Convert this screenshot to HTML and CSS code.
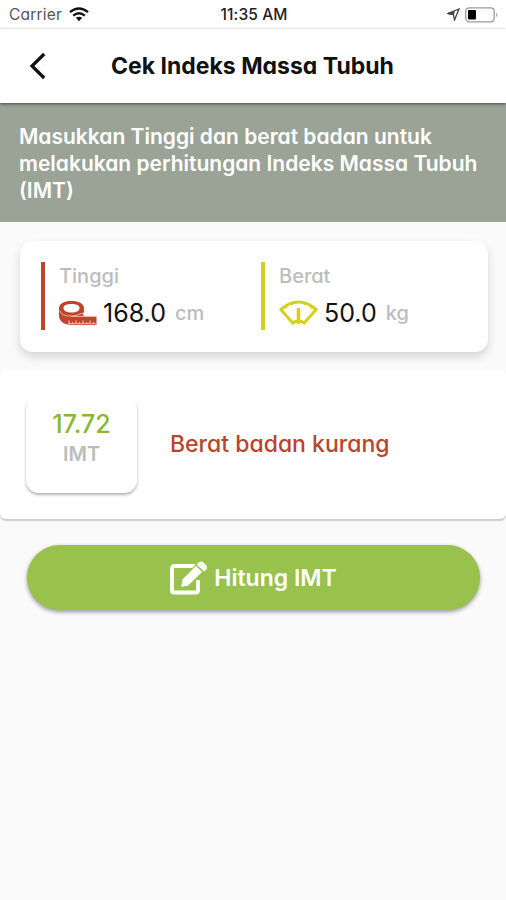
FILE: index.html
```html
<!DOCTYPE html>
<html lang="id">
<head>
<meta charset="utf-8">
<title>Cek Indeks Massa Tubuh</title>
<link rel="stylesheet" href="styles.css">
</head>
<body>
<div class="status">
  <div class="status-left"><span class="carrier">Carrier</span>
    <svg width="20" height="15" viewBox="0 0 20 15" fill="none" stroke="#111" stroke-width="2.3"><path d="M1 5.2Q10-2.2 19 5.2M4.2 8.6Q10 3.8 15.8 8.6"/><path d="M6.8 10.8Q10 8.5 13.2 10.8L10 14.2Z" fill="#111" stroke="none"/></svg>
  </div>
  <span class="clock">11:35 AM</span>
  <div class="status-right">
    <svg width="13" height="13" viewBox="0 0 13 13" fill="none" stroke="#444" stroke-width="1.3"><path d="M1 5.5L12 1L7.5 12L6.4 6.4Z"/><path d="M1 5.5L7 4L6.4 6.4Z" fill="#333"/></svg>
    <svg width="34" height="16" viewBox="0 0 34 16"><rect x=".8" y=".8" width="28.4" height="14" rx="3.5" fill="#fff" stroke="#999" stroke-width="1.3"/><rect x="3" y="3" width="8" height="9.6" rx="1" fill="#000"/><path d="M31.2 5.5Q33.4 7.8 31.2 10.2Z" fill="#999"/></svg>
  </div>
</div>
<header class="bar">
  <svg class="back" width="18" height="28" viewBox="0 0 18 28" fill="none" stroke="#111" stroke-width="3.2"><path d="M15.2 2L3 14L15.2 26"/></svg>
  <h1><span>Cek Indeks Massa Tubuh</span></h1>
</header>
<p class="banner"><span class="b1">Masukkan Tinggi dan berat badan untuk</span><br><span class="b2">melakukan perhitungan Indeks Massa Tubuh</span><br><span class="b3">(IMT)</span></p>
<section class="measures">
  <div class="measure height">
    <div class="label">Tinggi</div>
    <div class="reading">
      <svg width="38" height="26" viewBox="0 0 38 26"><path fill="#bd452b" fill-rule="evenodd" d="M0 8.5C0 3.5 5 1 12.5 1S25 3.5 25 8.5V12L23.5 14Q24 16 28 16.5H37.5V25H13C5 25 0 21 0 16ZM4.5 8C4.5 11 8 12.5 12.5 12.5S20.5 11 20.5 8S17 4 12.5 4S4.5 5 4.5 8Z"/><path d="M.5 10.5Q2.5 16.5 13 16Q18 16 23.5 13M12 16.5H37" fill="none" stroke="#edbcb0" stroke-width=".9"/><path d="M10 20.5V23.5M13.5 22V24M17 20.5V23.5M20.5 22V24M24 20.5V23.5M27.5 22V24M31 20.5V23.5M34.5 22V24M9 23.8H37" stroke="#efc5bc" stroke-width="1.1" fill="none"/></svg>
      <span class="value">168.0</span><span class="unit">cm</span>
    </div>
  </div>
  <div class="measure weight">
    <div class="label">Berat</div>
    <div class="reading">
      <svg width="39" height="26" viewBox="0 0 39 26" fill="none" stroke="#d4d01f" stroke-width="3" stroke-linejoin="round"><path d="M1.8 9.5Q19.5-5.5 37.2 9.5L25 23.2L22.5 21.2L19.5 22.7L16.5 21.2L14 23.2Z"/><path d="M19.5 8V22" stroke-width="3.6"/><path d="M6 5.5l2 3M12.5 3l1 2.2M26.5 3l-1 2.2M33 5.5l-2 3" stroke-width="1.3"/></svg>
      <span class="value">50.0</span><span class="unit">kg</span>
    </div>
  </div>
</section>
<section class="result">
  <div class="score"><span class="score-value">17.72</span><span class="score-label">IMT</span></div>
  <div class="verdict">Berat badan kurang</div>
</section>
<button class="action">
  <svg width="38" height="34" viewBox="0 0 38 34"><path d="M25 5H4Q2 5 2 7V29.500Q2 31.500 4 31.500H26Q28 31.500 28 29.500V19" fill="none" stroke="#fff" stroke-width="3.8"/><path d="M10.500 26.500L12 18L26 4L33 11L18.500 25Z" fill="#fff" stroke="#98c24b" stroke-width="1.200"/><path d="M27.500 2.500Q30.500-1 33.500 1.500L36 4Q38.500 7 35.500 9.500L34.200 10.500L26.500 3.500Z" fill="#fff"/></svg>
  <span>Hitung IMT</span>
</button>
</body>
</html>
```
FILE: styles.css
```css
* { box-sizing: border-box; }
body {
  margin: 0;
  min-height: 900px;
  background: #fafafa;
  font-family: Inter, "Liberation Sans", sans-serif;
  font-feature-settings: "cv11";
}
svg { display: block; flex: none; }
.status {
  height: 29px;
  padding: 0 7px 0 9px;
  display: grid;
  grid-template-columns: 1fr auto 1fr;
  align-items: center;
  background: #fff;
  font-size: 15.5px;
  color: #222;
}
.status-left, .status-right { display: flex; align-items: center; }
.status-left { gap: 7px; }
.carrier { color: #555; letter-spacing: .2px; }
.clock { font-weight: 500; letter-spacing: .1px; }
.status-right { justify-content: flex-end; gap: 5px; }
.bar {
  position: relative;
  height: 74px;
  padding-left: 29px;
  display: flex;
  align-items: center;
  background: #fff;
  box-shadow: 0 1px 3px rgba(0, 0, 0, .55);
}
.bar h1 {
  margin: 0 0 0 64px;
  font-size: 23px;
  font-weight: 700;
  white-space: nowrap;
  color: #111;
}
.banner {
  margin: 0;
  height: 119px;
  padding: 20px 19px 0;
  background: #9aa396;
  color: #fff;
  font-size: 21px;
  line-height: 27px;
  font-weight: 600;
  white-space: nowrap;
}
.measures {
  margin: 19px 18px 0 20px;
  height: 111px;
  padding: 21px 21px;
  display: grid;
  grid-template-columns: 220px 1fr;
  border-radius: 13px;
  background: #fff;
  box-shadow: 0 5px 10px rgba(0, 0, 0, .15);
}
.measure { height: 68px; padding-left: 14px; border-left: 4px solid #bd452b; }
.weight { border-color: #d4d01f; }
.label { height: 30px; line-height: 28px; font-size: 20px; font-weight: 500; color: #bcbcbc; }
.reading { height: 41px; display: flex; align-items: center; }
.value { margin-left: 6px; font-size: 25px; color: #111; }
.unit { margin-left: 9px; font-size: 20px; font-weight: 500; color: #bcbcbc; }
.result {
  margin-top: 18px;
  height: 149px;
  padding: 26px 26px 0;
  display: flex;
  border-radius: 6px;
  background: #fff;
  box-shadow: 0 2px 1px rgba(0, 0, 0, .18);
}
.score {
  width: 111px;
  height: 97px;
  padding-top: 12px;
  display: flex;
  flex-direction: column;
  align-items: center;
  border-radius: 13px;
  background: #fff;
  box-shadow: 0 2px 3px rgba(0, 0, 0, .3);
}
.score-value { font-size: 25px; line-height: 32px; font-weight: 500; color: #8bb82e; }
.score-label { font-size: 20px; line-height: 28px; font-weight: 600; color: #bcbcbc; }
.verdict { margin: 33px 0 0 33px; font-size: 23px; line-height: 30px; font-weight: 500; color: #b8452a; white-space: nowrap; }
.action {
  margin: 26px 26px 0 27px;
  width: 453px;
  height: 65px;
  padding: 0;
  display: flex;
  align-items: center;
  justify-content: center;
  gap: 6px;
  border: 0;
  border-radius: 33px;
  background: #98c24b;
  color: #fff;
  font: 600 23px Inter, "Liberation Sans", sans-serif;
  font-feature-settings: "cv11";
  box-shadow: 0 2px 4px rgba(0, 0, 0, .4);
}
```
